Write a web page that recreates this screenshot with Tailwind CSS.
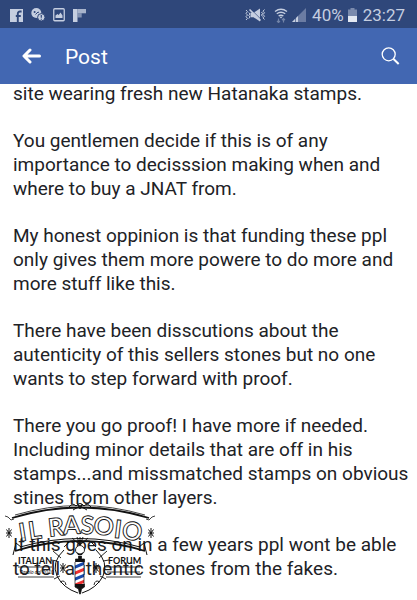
<!DOCTYPE html>
<html lang="en">
<head>
<meta charset="utf-8">
<meta name="viewport" content="width=device-width, initial-scale=1">
<title>Post</title>
<script src="https://cdn.jsdelivr.net/npm/@tailwindcss/browser@4"></script>
</head>
<body class="relative min-h-screen overflow-hidden bg-white font-['Roboto',sans-serif] text-[#212226]">
<header>
  <div class="flex h-7 items-center justify-between bg-[#2f477a] pt-[2px] pr-3 pl-[10px] text-[#c5cee0]">
    <div class="flex items-center gap-2">
      <svg class="h-[13px] w-[13px]" viewBox="0 0 13 13" aria-label="Facebook"><path d="M0 0h13v13H0z" fill="currentColor"/><path d="M7.800 13V5c0-1.800.8-2.500 2.300-2.500h1.500M5.800 7h5" fill="none" stroke="#2f477a" stroke-width="1.900"/></svg>
      <svg class="h-[14px] w-[14px]" viewBox="0 0 14 14" aria-label="Alert"><circle cx="5.300" cy="5" r="5" fill="currentColor"/><circle cx="3.600" cy="4" r="1" fill="#2f477a"/><path d="M4.500 6.500 7 4l1 .5" fill="none" stroke="#2f477a"/><circle cx="10.300" cy="9.300" r="3.700" fill="currentColor" stroke="#2f477a"/><path d="M10.300 7v2.800M10.300 10.800v1" stroke="#2f477a" stroke-width="1.200"/></svg>
      <svg class="h-[14px] w-[12px]" viewBox="0 0 12 14" aria-label="Picture"><rect x=".75" y=".75" width="10.500" height="12" rx="1" fill="none" stroke="currentColor" stroke-width="1.300"/><path d="M2.500 10V7.500l2-1.500 1.200 1 1.800-2.500 2 3V10z" fill="currentColor"/></svg>
      <svg class="h-[13px] w-[13px]" viewBox="0 0 13 13" fill="currentColor" aria-label="Flipboard"><path d="M0 0h4.500v13H0z"/><path d="M4.500 0H13v4.300H4.500z" opacity=".8"/><path d="M4.500 4.300h4.200v4.200H4.500z" opacity=".55"/></svg>
    </div>
    <div class="flex items-center">
      <svg class="mr-2 h-[14px] w-[21px]" viewBox="0 0 21 14" aria-label="Vibrate, muted"><path d="M5.500 4.700h3L15 .500v13L8.500 9.300h-3z" fill="currentColor"/><path d="M5.500 1 17 12.500" stroke="#2f477a" stroke-width="1"/><path d="M4.500 1.500 15.500 12.500" fill="none" stroke="currentColor" stroke-width="1.600"/><path d="M1 2l1.500 1.700L1 5.300 2.500 7 1 8.700l1.500 1.600L1 12M3.800 4.500 5 6 3.800 7.500 5 9l-1.200 1.500M19.500 1.500 18 3.200l1.500 1.600L18 6.500l1.500 1.700L18 9.900l1.500 1.600M16.500 4l1 1.500-1 1.500 1 1.500" fill="none" stroke="currentColor"/></svg>
      <svg class="mr-1 h-[15px] w-[14px]" viewBox="0 0 14 15" fill="none" stroke="currentColor" stroke-width="1.400" aria-label="Wi-Fi"><path d="M1 3.500q6-4.500 12 0M2.800 5.800q4.200-3 8.400 0M4.600 8q2.400-1.600 4.800 0"/><path d="M5.500 8.800h3L7 10.500z" fill="currentColor" stroke="none"/><path d="M4.500 10.500v4m-1.500-1.500 1.500 1.500L6 13M9.500 14.500v-4M8 12l1.500-1.500L11 12" opacity=".45" stroke-width="1.200"/></svg>
      <svg class="mr-[6px] h-[14px] w-[14px]" viewBox="0 0 14 14" fill="currentColor" aria-label="Signal"><path d="M14 0v14H0z" opacity=".4"/><path d="M6 8v6H4V10zM3 11v3H0z"/></svg>
      <span class="text-[17px] leading-6">40%</span>
      <svg class="mr-[6px] ml-1 h-[14px] w-[9px]" viewBox="0 0 9 14" fill="currentColor" aria-label="Battery"><path d="M2.500 0h4v1.500H9V8H0V1.500h2.500z" opacity=".5"/><path d="M0 8h9v6H0z" fill="#e3e8f2"/></svg>
      <time class="text-[17px] leading-6">23:27</time>
    </div>
  </div>
  <div class="flex h-14 items-center bg-[#4267b2] pr-[17px] pl-[22px] text-white">
    <button type="button" aria-label="Back" class="mr-6"><svg class="block h-4 w-[19px]" viewBox="0 0 19 16" fill="none" stroke="currentColor" stroke-width="3" stroke-linecap="round" stroke-linejoin="round"><path d="M17.500 8H3M8 2 2 8l6 6"/></svg></button>
    <h1 class="flex-1 pt-px text-[21px] leading-7">Post</h1>
    <button type="button" aria-label="Search"><svg class="block h-[18px] w-[19px]" viewBox="0 0 19 18" fill="none" stroke="currentColor" stroke-width="1.300"><circle cx="7.700" cy="7.300" r="6.500"/><path d="m12.500 12 5.200 5" stroke-width="2"/></svg></button>
  </div>
</header>
<main class="-mt-[2px] space-y-[23px] pr-2 pl-[13px] text-[19px] leading-6">
  <p>site wearing fresh new Hatanaka stamps.</p>
  <p>You gentlemen decide if this is of any importance to decisssion making when and where to buy a JNAT from.</p>
  <p>My honest oppinion is that funding these ppl only gives them more powere to do more and more stuff like this.</p>
  <p>There have been disscutions about the autenticity of this sellers stones but no one wants to step forward with proof.</p>
  <p>There you go proof! I have more if needed. Including minor details that are off in his stamps...and missmatched stamps on obvious stines from other layers.</p>
  <p>If this goes on in a few years ppl wont be able to tell authentic stones from the fakes.</p>
</main>
<svg class="absolute bottom-0 left-0 h-[100px] w-[160px]" viewBox="0 0 160 100" role="img" aria-label="Il Rasoio Italian Forum" fill="none" stroke="#111">
  <defs>
    <g id="star" stroke-width="1"><path d="M-3 0h6M0-5V5M-2.500-3.500l5 7M2.500-3.500l-5 7"/></g>
    <clipPath id="pole"><path d="M75 62h9v22h-9z"/></clipPath>
  </defs>
  <path d="M12 18Q80-3 149 18" stroke-width="1.800"/>
  <path d="M5 16q3 0 6 4l3-1M155 16q-3 0-6 4l-3-1M15 15Q80-4 145 15" stroke-width=".8"/>
  <path d="M69 7q4-5 7-1 4-5 8 0 3-4 7 1M73 10l7-4 7 4M78 4l2 5 2-5" stroke-width="1"/>
  <path d="M15 51Q80 31 145 51" stroke-width="1.800"/>
  <path d="M13 55l3-12 5 4M147 55l-3-12-5 4M20 47Q80 30 140 47"/>
  <use href="#star" x="9" y="33"/><use href="#star" x="151" y="33"/>
  <g font-family="'Lato',sans-serif" font-weight="700" font-size="25" stroke-width=".9" fill="#fff" fill-opacity=".8" text-anchor="middle">
    <text transform="translate(24 41) rotate(-9)">I</text>
    <text transform="translate(36 39) rotate(-8)">L</text>
    <text transform="translate(57 36) rotate(-6)">R</text>
    <text transform="translate(72 34) rotate(-2)">A</text>
    <text transform="translate(87 34) rotate(2)">S</text>
    <text transform="translate(103 35) rotate(5)">O</text>
    <text transform="translate(117 38) rotate(7)">I</text>
    <text transform="translate(131 40) rotate(8)">O</text>
  </g>
  <g font-family="'Lato',sans-serif" fill="#111" stroke="none">
    <g font-weight="700" font-size="9">
      <text x="18" y="64">ITALIAN</text>
      <text x="108" y="64">FORUM</text>
    </g>
    <text x="20" y="74" font-size="5" font-style="italic">Rasoio dal 2010</text>
  </g>
  <path d="M18 67h34M18 77h36M106 67h34M107 72h33M106 77h35" stroke-width=".8"/>
  <path d="M64 50q-13 12-7 26 6 12 21 17M96 50q13 12 7 26-6 12-21 17" stroke-width="1"/>
  <path d="m53 51 8 7m-10 2 6 1m-3 18 6-3m47-25-8 7m10 2-6 1m3 18-6-3M64 47l5-5M96 47l-5-5M60 82q5-3 6 3M100 82q-5-3-6 3" stroke-width=".9"/>
  <use href="#star" x="63" y="68"/><use href="#star" x="96" y="68"/>
  <path d="m80 45-8-7m8 7-3-8m3 8v-8m0 8 3-8m-3 8 8-7M67 43q6-5 13 1 7-6 13-1" stroke-width=".9"/>
  <circle cx="80" cy="50" r="4.500" fill="#fff" stroke-width=".9"/><path d="M77 52q3 3 6 0l-1 3h-4z" fill="#111" stroke="none"/>
  <path d="M78.500 56h3v3h3v3h-9v-3h3zM75 84h9.500v3l-3 2-1 5h-1l-1-5-3.500-2z" fill="#111" stroke-width=".7"/>
  <g clip-path="url(#pole)"><path d="M75 61h10v24H75z" fill="#fff" stroke="none"/><path d="m73 68 14-6M73 80l14-6M73 92l14-6" stroke="#1749ad" stroke-width="3"/><path d="m73 74 14-6M73 86l14-6" stroke="#ee3030" stroke-width="3"/></g>
  <path d="M75 62v22M84 62v22" stroke-width=".7"/>
</svg>
</body>
</html>
